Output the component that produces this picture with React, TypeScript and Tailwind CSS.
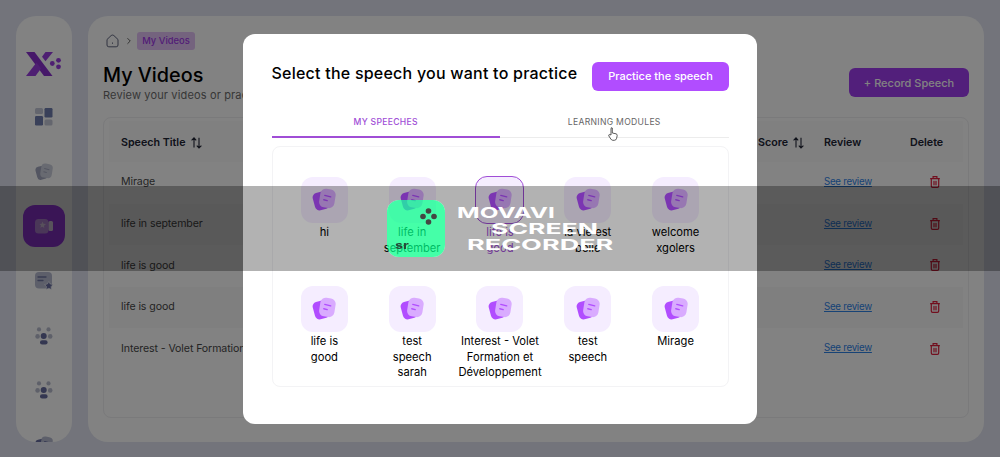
import { ChevronRight } from 'lucide-react';

const rows = ['Mirage', 'life in september', 'life is good', 'life is good', 'Interest - Volet Formation'];

const speeches = [
  { lines: ['hi'] },
  { lines: ['life in', 'september'] },
  { lines: ['life is', 'good'], active: true },
  { lines: ['la vie est', 'belle'] },
  { lines: ['welcome', 'xgolers'] },
  { lines: ['life is', 'good'] },
  { lines: ['test', 'speech', 'sarah'] },
  { lines: ['Interest - Volet', 'Formation et', 'Développement'] },
  { lines: ['test', 'speech'] },
  { lines: ['Mirage'] },
];

function Logo() {
  return (
    <svg className="shrink-0" width="36" height="24" viewBox="0 0 36 24" fill="#9a3de0">
      <path d="M0 0H8.5L26.5 24H18Z" fill="#8a2fcf" />
      <path d="M0 24L10.5 10.5L15 16.5L9.5 24Z" />
      <path d="M16 4.7L19.5 0H27L19.5 9.3Z" />
      <circle cx="26.3" cy="11.5" r="2.4" />
      <circle cx="32.5" cy="8.3" r="2.4" />
      <circle cx="32.5" cy="14.8" r="2.4" />
    </svg>
  );
}

function Cards({ size = 24, back = '#b14dff', front = '#d9abff' }) {
  return (
    <svg width={size} height={size} viewBox="0 0 24 24">
      <rect x="1.6" y="4" width="15" height="17.8" rx="4.5" transform="rotate(-15 9.2 12.7)" fill={back} />
      <rect x="7.7" y="1" width="15.4" height="18.8" rx="5.4" transform="rotate(9 15.2 10.3)" fill={front} />
      <path d="M12.8 7.4L18.7 8.9M11.8 11.7L15.2 12.6" stroke={back} strokeWidth="1.4" strokeLinecap="round" />
    </svg>
  );
}

function People() {
  return (
    <svg width="18" height="18" viewBox="0 0 18 18" fill="#b9bccf">
      <circle cx="4" cy="2.4" r="2.1" />
      <circle cx="13.5" cy="2.4" r="2.1" />
      <circle cx="2.6" cy="9.4" r="2.3" />
      <circle cx="15.2" cy="9.4" r="2.3" />
      <circle cx="8.7" cy="9" r="3.8" fill="#fff" />
      <circle cx="8.7" cy="9" r="3" fill="#666c9f" />
      <rect x="5" y="13.2" width="7.6" height="4.3" rx="2.1" fill="#666c9f" />
    </svg>
  );
}

function Sidebar() {
  return (
    <aside className="flex h-[426px] w-14 shrink-0 flex-col items-center overflow-hidden rounded-[20px] bg-white pt-9">
      <Logo />
      <svg className="mt-8 shrink-0" width="18" height="18" viewBox="0 0 18 18" fill="#717fae">
        <rect width="8" height="6" rx="1.5" fill="#c4c8d8" />
        <rect x="9.5" width="8" height="9.5" rx="1.2" />
        <rect y="8" width="8" height="9.5" rx="1.2" />
        <rect x="9.5" y="11.5" width="8" height="6" rx="1.5" fill="#c4c8d8" />
      </svg>
      <div className="mt-[37px] h-[18px] shrink-0"><Cards size={18} back="#a3a8bf" front="#cdd0dd" /></div>
      <div className="mt-6 grid h-[42px] w-[42px] shrink-0 place-items-center rounded-xl bg-[#a23df2]">
        <svg width="20" height="18" viewBox="0 0 20 18">
          <rect x="1" y="2" width="13.5" height="14.5" rx="3.5" fill="#cf9af5" />
          <rect x="14.5" y="4" width="4.5" height="10" rx="1.5" fill="#f6e8ff" />
          <path d="M8.5 4.5L9.5 6.8L12 7L10 8.7L10.3 11L8.3 9.8L6.3 10.8L7 8.5L5.5 7L7.6 6.8Z" fill="#f3dfff" />
        </svg>
      </div>
      <svg className="mt-[25px] shrink-0" width="18" height="18" viewBox="0 0 18 18">
        <rect width="17" height="16.5" rx="4" fill="#b6bbd1" />
        <path d="M3 5H11M3 8.5H8" stroke="#6f759f" strokeWidth="1.3" strokeLinecap="round" />
        <path d="M13.8 9.5L15.2 12L18 12.6L16.1 14.6L16.4 17.5L13.8 16.3L11.1 17.5L11.5 14.6L9.6 12.6L12.4 12Z" fill="#666c9f" stroke="#fff" strokeWidth=".6" />
      </svg>
      <div className="mt-[37px] h-[18px] shrink-0"><People /></div>
      <div className="mt-9 h-[18px] shrink-0"><People /></div>
      <div className="mt-[37px] h-[18px] shrink-0"><Cards size={18} back="#666c9f" front="#b6bbd1" /></div>
    </aside>
  );
}

function Trash() {
  return (
    <svg width="10" height="12" viewBox="0 0 10 12" fill="none" stroke="#e01e3c" strokeWidth="1.2" strokeLinecap="round">
      <path d="M.6 2.7H9.4M3.1 2.5V.7H6.9V2.5M1.3 2.9V10Q1.3 11.3 2.6 11.3H7.4Q8.7 11.3 8.7 10V2.9M4 5.3V8.8M6 5.3V8.8" />
    </svg>
  );
}

function Sort() {
  return (
    <svg className="ml-[5px]" width="11" height="12" viewBox="0 0 11 12" fill="none" stroke="#202433" strokeWidth="1.1">
      <path d="M3 10.5V1M.6 3.3L3 .9L5.2 3.3M8 .8V11M5.8 8.7L8 11L10.4 8.7" />
    </svg>
  );
}

function VideosPage() {
  return (
    <main className="h-[426px] w-[896px] rounded-[20px] bg-white pt-[15px] pr-[15px] pl-[15px]">
      <div className="flex h-[19px] items-center">
        <svg className="ml-[3px]" width="13" height="14" viewBox="0 0 13 14" fill="none" stroke="#60657f">
          <path d="M1 5.5L5.2 1.5Q6.5.6 7.8 1.5L12 5.5V11Q12 12.8 10.2 12.8H2.8Q1 12.8 1 11ZM6.5 8.5V9.8" />
        </svg>
        <ChevronRight className="ml-[5px] text-[#444]" size={10} />
        <span className="ml-[3px] flex h-[18px] w-[58px] items-center justify-center rounded-[3px] bg-[#e3c3f8] pt-0.5 text-[9.4px] font-medium text-[#a137e8]">My Videos</span>
      </div>
      <div className="flex h-[67px] items-start justify-between">
        <div>
          <h1 className="mt-[11px] text-[19.8px] leading-7 font-medium text-black">My Videos</h1>
          <p className="-mt-px text-[11px] leading-[14px] tracking-[0.15px] text-[#6d6d6d]">Review your videos or practice</p>
        </div>
        <button className="mt-[18px] h-[29px] w-[120px] rounded-md bg-[#a23df2] pt-0.5 text-[11px] font-medium text-white">+ Record Speech</button>
      </div>
      <section className="h-[301px] rounded-lg border border-[#efeff2] px-[5px] pt-[3px]">
        <div className="grid h-[41px] grid-cols-[637px_66px_86px_1fr] items-center bg-[#fbfbfc] pt-1 pl-3 text-[10.7px] font-semibold text-[#202433]">
          <span className="flex items-center">Speech Title<Sort /></span>
          <span className="flex items-center">Score<Sort /></span>
          <span>Review</span>
          <span>Delete</span>
        </div>
        {rows.map((row, i) => (
          <div key={i} className="grid h-[41.6px] grid-cols-[637px_66px_86px_1fr] items-center pb-px pl-3 text-[10.6px] tracking-[-0.1px] text-[#484848] odd:bg-[#fafafa]">
            <span>{row}</span>
            <span />
            <a className="text-[9.7px] tracking-[-0.25px] text-[#2e83e8] underline">See review</a>
            <span className="pl-5"><Trash /></span>
          </div>
        ))}
      </section>
    </main>
  );
}

function PracticeModal() {
  return (
    <div className="fixed inset-0 bg-black/49">
      <section className="mt-[34px] ml-[243px] h-[390px] w-[514px] rounded-xl bg-white px-[28.5px] pt-7">
        <div className="flex h-[29px] items-center justify-between">
          <h2 className="-mt-2 text-[16px] font-medium tracking-[0.23px] whitespace-nowrap text-black">Select the speech you want to practice</h2>
          <button className="h-[29px] w-[137px] rounded-md bg-[#b14dff] pl-px text-[11px] font-medium whitespace-nowrap text-white">Practice the speech</button>
        </div>
        <div className="mt-[15px] grid h-8 grid-cols-2 border-b border-[#ececec] text-center text-[8.6px] leading-8 tracking-[0.3px]">
          <span className="h-8 border-b-2 border-[#a04dd6] font-medium text-[#a04dd6]">MY SPEECHES</span>
          <span className="text-[#666]">LEARNING MODULES</span>
        </div>
        <div className="mt-2 grid h-[241px] grid-cols-5 grid-rows-[109px_1fr] rounded-lg border border-[#f3f3f5] px-2 pt-[30px]">
          {speeches.map((speech, i) => (
            <div key={i} className="flex flex-col items-center text-black">
              <div className={`grid shrink-0 place-items-center rounded-xl bg-[#f5edff] ${speech.active ? '-mt-px h-12 w-[49px] -mb-px border border-[#a04dd6]' : 'h-[46px] w-[47px]'}`}><Cards /></div>
              <p className={`mt-[2px] text-center text-[11.2px] leading-[15.6px] whitespace-nowrap ${speech.active ? 'text-[#a04dd6]' : ''}`}>
                {speech.lines.map((line) => <span key={line} className="block">{line}</span>)}
              </p>
            </div>
          ))}
        </div>
      </section>
    </div>
  );
}

function RecorderMark() {
  return (
    <>
      <div className="fixed inset-x-0 top-[186px] h-[85px] bg-black/30" />
      <div className="fixed top-[200px] left-[387px] h-[57px] w-[58px] rounded-xl bg-[#00ff88]/73 backdrop-brightness-[1.43]">
        <svg className="ml-[33px] mt-2" width="17" height="17" viewBox="0 0 17 17" fill="#444743">
          <circle cx="8.5" cy="3" r="2.8" />
          <circle cx="3" cy="8.5" r="2.8" />
          <circle cx="14" cy="8.5" r="2.8" />
          <circle cx="8.5" cy="14" r="2.8" />
        </svg>
        <span className="absolute top-[39px] left-2 origin-left scale-x-[1.3] text-[11px] leading-[13px] font-bold text-[#27483a]">sr</span>
      </div>
      <div className="fixed top-[205px] left-[457px] text-[15px] leading-4 font-bold whitespace-nowrap text-white">
        <span className="block w-fit origin-left scale-x-[1.62]">MOVAVI</span>
        <span className="ml-[34px] block w-fit origin-left scale-x-[1.77]">SCREEN</span>
        <span className="ml-2.5 block w-fit origin-left scale-x-[1.8]">RECORDER</span>
      </div>
    </>
  );
}

export default function App() {
  return (
    <div className="h-[457px] w-[1000px] overflow-hidden bg-[#e1e4f1] font-['Inter',sans-serif]">
      <div className="flex gap-4 pt-4 pl-4">
        <Sidebar />
        <VideosPage />
      </div>
      <PracticeModal />
      <RecorderMark />
      <svg className="absolute top-[127px] left-[608px]" width="10" height="14" viewBox="0 0 10 14">
        <path d="M3 8V2Q3-.1 4.3 1V6L8 6.8Q9.3 7.1 9.2 8.6L8.6 11.3Q8.2 13.3 6.3 13.3H4.8Q3.6 13.3 2.8 12L.8 8.9Q.4 7.6 1.7 7.5Z" fill="#fff" stroke="#333" strokeWidth=".8" />
      </svg>
    </div>
  );
}
